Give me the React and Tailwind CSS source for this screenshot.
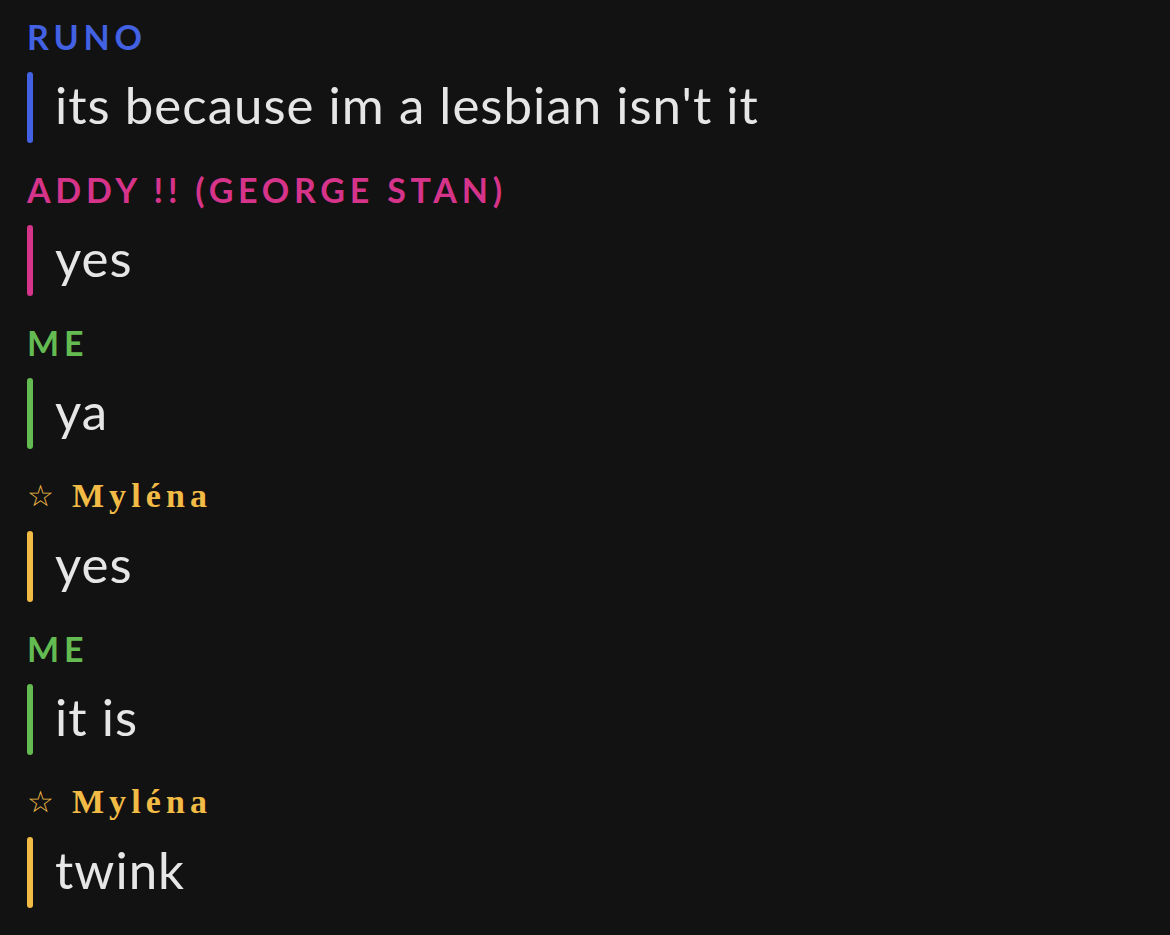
import React from 'react'

const messages = [
  { name: 'RUNO', color: 'text-[#4262e3]', bar: 'bg-[#4262e3]', text: "its because im a lesbian isn't it" },
  { name: 'ADDY !! (GEORGE STAN)', color: 'text-[#d6338a]', bar: 'bg-[#d6338a]', text: 'yes' },
  { name: 'ME', color: 'text-[#63bb52]', bar: 'bg-[#63bb52]', text: 'ya' },
  { name: 'Myléna', star: true, color: 'text-[#f1bb45]', bar: 'bg-[#f1bb45]', text: 'yes' },
  { name: 'ME', color: 'text-[#63bb52]', bar: 'bg-[#63bb52]', text: 'it is' },
  { name: 'Myléna', star: true, color: 'text-[#f1bb45]', bar: 'bg-[#f1bb45]', text: 'twink' },
]

const Name = ({ m }) => {
  if (m.star) {
    return (
      <div className={`h-[30px] leading-[30px] flex items-center ${m.color}`}>
        <span className="text-[30px] font-['DejaVu_Sans',sans-serif] mr-[18px]">☆</span>
        <span className="text-[34px] font-bold tracking-[0.15em] font-['Liberation_Serif',serif]">{m.name}</span>
      </div>
    )
  }
  return (
    <div className={`h-[30px] leading-[30px] text-[34px] font-bold tracking-[0.14em] font-['Lato',sans-serif] ${m.color}`}>
      {m.name}
    </div>
  )
}

export default function App() {
  return (
    <div className="w-[1170px] h-[935px] bg-[#121212] pt-[22px] pl-[27px] overflow-hidden">
      {messages.map((m, i) => (
        <div key={i} className="h-[153px]">
          <Name m={m} />
          <div className="mt-[20px] flex items-stretch h-[71px]">
            <div className={`w-[6px] rounded-full ${m.bar}`} />
            <div className="ml-[22px] text-[51px] leading-[66px] tracking-[0.02em] text-[#e6e6e6] font-['Lato',sans-serif]">
              {m.text}
            </div>
          </div>
        </div>
      ))}
    </div>
  )
}
